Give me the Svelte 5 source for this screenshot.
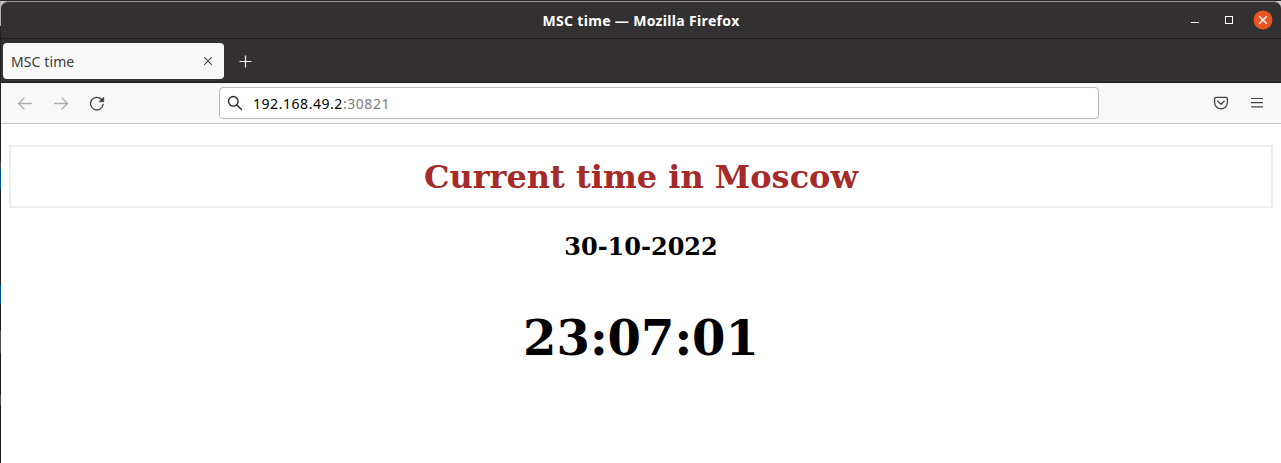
<script>
  const title = 'MSC time';
  const host = '192.168.49.2';
  const port = ':30821';
</script>

<div class="screen">
  <div class="edge"></div>
  <div class="window">
    <header class="titlebar">
      <span class="title">{title} — Mozilla Firefox</span>
      <div class="controls">
        <svg width="82" height="20" viewBox="0 0 82 20">
          <path d="M0 12.5h8" stroke="#fff" fill="none" />
          <rect x="34.5" y="6.5" width="7" height="7" stroke="#fff" fill="none" />
          <circle cx="72" cy="10" r="9.4" fill="#e95420" />
          <path d="M68.2 6.2l7.6 7.6M75.8 6.2l-7.6 7.6" stroke="#fff" stroke-width="1.4" />
        </svg>
      </div>
    </header>
    <div class="tabs">
      <div class="tab">
        <span class="tabtext">{title}</span>
        <svg width="10" height="10" viewBox="0 0 10 10"><path d="M1.2 1.2l7.6 7.6M8.8 1.2L1.2 8.8" stroke="#444" stroke-width="1.1" /></svg>
      </div>
      <svg class="plus" width="13" height="13" viewBox="0 0 13 13"><path d="M6.5 .5v12M.5 6.5h12" stroke="#fbfbfe" stroke-width="1.2" /></svg>
    </div>
    <nav class="toolbar">
      <div class="nav">
        <svg width="16" height="16" viewBox="0 0 16 16" fill="none" stroke="#acacad" stroke-width="1.3" stroke-linecap="round" stroke-linejoin="round"><path d="M14.5 8.5H1.8M7 3L1.5 8.5 7 14" /></svg>
        <svg width="16" height="16" viewBox="0 0 16 16" fill="none" stroke="#acacad" stroke-width="1.3" stroke-linecap="round" stroke-linejoin="round"><path d="M1.5 8.5h12.7M9 3l5.5 5.5L9 14" /></svg>
        <svg width="16" height="16" viewBox="0 0 16 16"><path d="M12.4 4.3A6.3 6.3 0 1 0 14.1 9.4" fill="none" stroke="#3b3b3d" stroke-width="1.3" stroke-linecap="round" /><path d="M14.8 2v4.8H10z" fill="#3b3b3d" stroke="#3b3b3d" stroke-width=".5" stroke-linejoin="round" /></svg>
      </div>
      <div class="urlbar">
        <svg width="16" height="16" viewBox="0 0 16 16" fill="none" stroke="#222" stroke-width="1.35" stroke-linecap="round"><circle cx="6.3" cy="6.3" r="4.8" /><path d="M9.9 9.9l4.6 4.6" /></svg>
        <span class="url">{host}<span class="port">{port}</span></span>
      </div>
      <div class="tools">
        <svg width="16" height="16" viewBox="0 0 16 16" fill="none" stroke="#444446" stroke-width="1.3" stroke-linecap="round" stroke-linejoin="round"><path d="M3 2.4h10a1.4 1.4 0 0 1 1.4 1.4V7.5a6.4 6.4 0 0 1-12.8 0V3.8A1.4 1.4 0 0 1 3 2.4z" /><path d="M4.8 6.2L8 9.3l3.2-3.1" /></svg>
        <svg width="16" height="16" viewBox="0 0 16 16" fill="none" stroke="#444446" stroke-width="1.2"><path d="M2 3.5h12M2 7.7h12M2 11.9h12" /></svg>
      </div>
    </nav>
    <main>
      <h1>Current time in Moscow</h1>
      <h2>30-10-2022</h2>
      <p class="clock">23:07:01</p>
    </main>
  </div>
</div>

<style>
  :global(body) { margin: 0; background: #fff; overflow: hidden; }
  .screen { display: flex; box-sizing: border-box; width: 1281px; height: 463px; border-top: 1px solid #2c2529; background: linear-gradient(#c9c9c9 0 25px, #1d1d1d 25px); font-family: "Noto Sans", sans-serif; }
  .edge { width: 1px; background: linear-gradient(#b5b5b5 0 25px, #202020 25px 160px, #444 160px 168px, #00569b 168px 188px, #1d1d1d 188px 284px, #00569b 284px 303px, #1d1d1d 303px 329px, #4a4a4a 329px 352px, #1d1d1d 352px 394px, #4a4a4a 394px 404px, #1d1d1d 404px); }
  .window { width: 1280px; display: flex; flex-direction: column; }
  .titlebar { box-sizing: border-box; height: 38px; display: grid; grid-template-columns: 90px 1fr 90px; align-items: center; background: #333031; border-top: 1px solid #9a9899; border-bottom: 1px solid #201e1f; border-radius: 7px 7px 0 0; color: #fff; }
  .title { grid-column: 2; padding-top: 2px; text-align: center; font-size: 14px; font-weight: 700; letter-spacing: .33px; line-height: 20px; white-space: nowrap; }
  .controls { height: 20px; }
  svg { display: block; flex: none; }
  .tabs { box-sizing: border-box; height: 44px; display: flex; align-items: center; padding: 0 2px 3px; gap: 15px; background: #333031; border-bottom: 1px solid #1d1b1c; }
  .tab { box-sizing: border-box; width: 221px; height: 36px; display: flex; align-items: center; justify-content: space-between; padding: 0 11px 0 8px; background: #f9f9fa; border-radius: 4px; margin-top: 4px; }
  .tabtext { padding-top: 2px; font-size: 14px; letter-spacing: .1px; color: #3d3b3c; line-height: 20px; }
  .plus { margin-top: 5px; }
  .toolbar { box-sizing: border-box; height: 41px; display: flex; align-items: center; background: #f8f8f8; border-bottom: 1px solid #c4c4c4; }
  .nav { display: flex; gap: 20px; width: 202px; padding-left: 16px; }
  .urlbar { box-sizing: border-box; width: 880px; height: 32px; display: flex; align-items: center; gap: 10px; padding-left: 7px; border: 1px solid #bdbdbd; border-radius: 4px; background: #fff; }
  .url { padding-top: 2px; font-size: 14px; letter-spacing: .55px; color: #000; line-height: 20px; }
  .port { color: #7c7c7c; }
  .tools { display: flex; gap: 20px; margin-left: 114px; }
  main { flex: 1; padding: 21px 8px 0; background: #fff; text-align: center; font-family: "DejaVu Serif", serif; color: #000; }
  h1 { box-sizing: border-box; height: 63px; margin: 0; border: 2px solid #eee; font-size: 32px; line-height: 61px; color: brown; }
  h2 { margin: 25px 0 0; font-size: 24px; line-height: 28px; }
  .clock { margin: 49px 0 0; font-size: 48px; font-weight: 700; line-height: 56px; }
</style>
